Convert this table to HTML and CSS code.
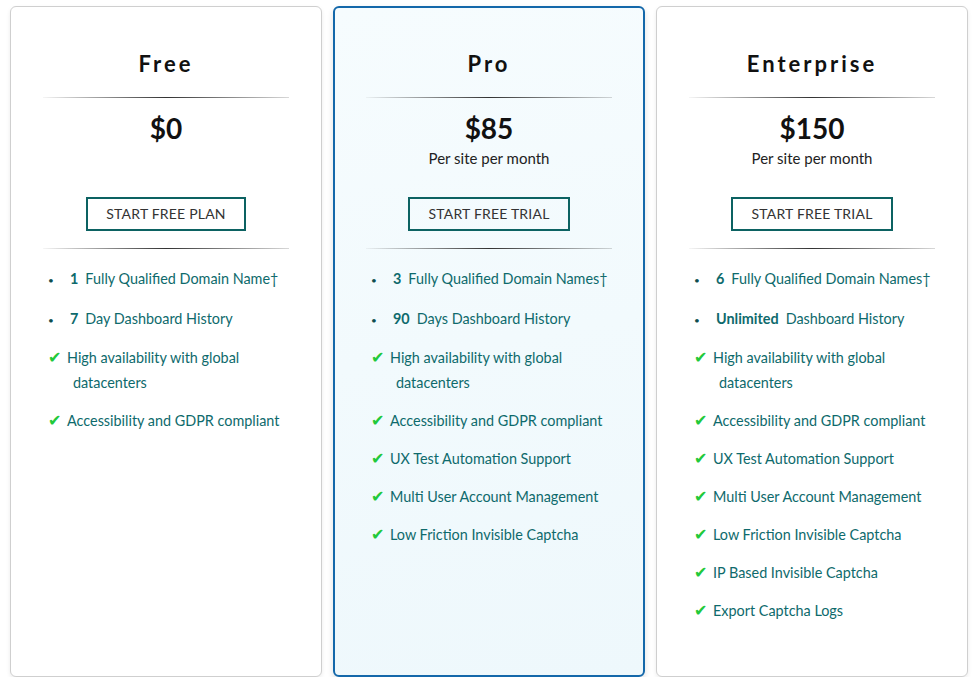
FILE: index.html
```html
<!DOCTYPE html>
<html lang="en">
<head>
<meta charset="utf-8">
<title>Pricing</title>
<link rel="stylesheet" href="styles.css">
</head>
<body>
<div class="plans">
  <section class="card">
    <h2 class="title">Free</h2>
    <hr class="rule">
    <div class="price">$0</div>
    <div class="per">&nbsp;</div>
    <div class="cta"><a class="btn" href="#">START FREE PLAN</a></div>
    <hr class="rule">
    <ul class="features">
      <li class="dot"><span class="bullet">•</span><b>1</b><span class="txt">Fully Qualified Domain Name†</span></li>
      <li class="dot"><span class="bullet">•</span><b>7</b><span class="txt">Day Dashboard History</span></li>
      <li class="chk"><span class="tick">✔</span>High availability with global datacenters</li>
      <li class="chk"><span class="tick">✔</span>Accessibility and GDPR compliant</li>
    </ul>
  </section>
  <section class="card card-pro">
    <h2 class="title">Pro</h2>
    <hr class="rule">
    <div class="price">$85</div>
    <div class="per">Per site per month</div>
    <div class="cta"><a class="btn" href="#">START FREE TRIAL</a></div>
    <hr class="rule">
    <ul class="features">
      <li class="dot"><span class="bullet">•</span><b>3</b><span class="txt">Fully Qualified Domain Names†</span></li>
      <li class="dot"><span class="bullet">•</span><b>90</b><span class="txt">Days Dashboard History</span></li>
      <li class="chk"><span class="tick">✔</span>High availability with global datacenters</li>
      <li class="chk"><span class="tick">✔</span>Accessibility and GDPR compliant</li>
      <li class="chk"><span class="tick">✔</span>UX Test Automation Support</li>
      <li class="chk"><span class="tick">✔</span>Multi User Account Management</li>
      <li class="chk"><span class="tick">✔</span>Low Friction Invisible Captcha</li>
    </ul>
  </section>
  <section class="card">
    <h2 class="title">Enterprise</h2>
    <hr class="rule">
    <div class="price">$150</div>
    <div class="per">Per site per month</div>
    <div class="cta"><a class="btn" href="#">START FREE TRIAL</a></div>
    <hr class="rule">
    <ul class="features">
      <li class="dot"><span class="bullet">•</span><b>6</b><span class="txt">Fully Qualified Domain Names†</span></li>
      <li class="dot"><span class="bullet">•</span><b>Unlimited</b><span class="txt">Dashboard History</span></li>
      <li class="chk"><span class="tick">✔</span>High availability with global datacenters</li>
      <li class="chk"><span class="tick">✔</span>Accessibility and GDPR compliant</li>
      <li class="chk"><span class="tick">✔</span>UX Test Automation Support</li>
      <li class="chk"><span class="tick">✔</span>Multi User Account Management</li>
      <li class="chk"><span class="tick">✔</span>Low Friction Invisible Captcha</li>
      <li class="chk"><span class="tick">✔</span>IP Based Invisible Captcha</li>
      <li class="chk"><span class="tick">✔</span>Export Captcha Logs</li>
    </ul>
  </section>
</div>
</body>
</html>
```
FILE: styles.css
```css
html, body {
  margin: 0;
  padding: 0;
  background: #ffffff;
}
body {
  font-family: Lato, "Open Sans", "Liberation Sans", sans-serif;
  color: #111;
}
.plans {
  display: flex;
  gap: 11px;
  padding: 6px 7px 0 10px;
  height: 671px;
  box-sizing: content-box;
}
.card {
  flex: 0 0 312px;
  box-sizing: border-box;
  border: 1px solid #cfcfcf;
  border-radius: 6px;
  background: #fff;
  box-shadow: 0 2px 4px rgba(0,0,0,0.08);
  padding: 0 32px 0 32px;
  display: flex;
  flex-direction: column;
}
.card-pro {
  flex-basis: 312px;
  border: 2px solid #1468aa;
  padding: 0 31px 0 31px;
  background: linear-gradient(170deg, #f6fcfe 0%, #eef8fc 100%);
  box-shadow: 0 3px 6px rgba(0,0,0,0.12);
}
.title {
  margin: 42px 0 0 0;
  font-size: 22px;
  line-height: 30px;
  font-weight: 700;
  letter-spacing: 3px;
  text-align: center;
  color: #111;
}
.card-pro .title { margin-top: 41px; }
.rule {
  border: 0;
  height: 1px;
  margin: 18px 0 0 0;
  background: linear-gradient(90deg, rgba(60,60,60,0.05) 0%, #333 50%, rgba(60,60,60,0.2) 100%);
}
.price {
  margin-top: 13px;
  font-size: 28px;
  line-height: 34px;
  font-weight: 700;
  text-align: center;
  color: #111;
}
.per {
  margin-top: 3px;
  font-size: 15px;
  line-height: 20px;
  text-align: center;
  color: #222;
}
.cta {
  display: flex;
  justify-content: center;
  margin-top: 29px;
}
.btn {
  display: block;
  box-sizing: border-box;
  height: 34px;
  padding: 0 18px;
  border: 2px solid #0c6262;
  color: #333;
  font-size: 14px;
  line-height: 30px;
  letter-spacing: 0.2px;
  text-decoration: none;
}
.cta + .rule { margin-top: 17px; }
.features {
  list-style: none;
  margin: 17px 0 0 0;
  padding: 0 0 0 5px;
  display: flex;
  flex-direction: column;
  gap: 13px;
}
.features li {
  font-size: 14.4px;
  line-height: 25px;
  color: #0e6a6c;
}
.features .dot {
  margin-bottom: 1.5px;
}
.features .dot b {
  font-weight: 700;
  color: #0e6a6c;
}
.bullet {
  display: inline-block;
  width: 22px;
  font-size: 10px;
  line-height: 10px;
  color: #0e4e50;
  vertical-align: baseline;
}
.txt {
  margin-left: 7px;
}
.chk {
  padding-left: 25px;
  text-indent: -25px;
}
.tick {
  display: inline-block;
  width: 19px;
  text-indent: 0;
  color: #22c93a;
  font-family: "DejaVu Sans", sans-serif;
  font-size: 16px;
  line-height: 10px;
  vertical-align: baseline;
}
```
